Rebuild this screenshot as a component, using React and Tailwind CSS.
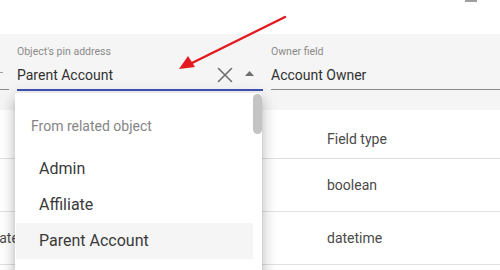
import { X } from 'lucide-react';

const rows = [
  { name: '', type: 'boolean' },
  { name: 'Date', type: 'datetime' },
];

const menuItems = ['Admin', 'Affiliate', 'Parent Account', 'Partner'];

const App = () => {
  return (
    <div
      className="relative w-[500px] h-[270px] overflow-hidden bg-white text-[#212121]"
      style={{ fontFamily: 'Roboto, "Liberation Sans", sans-serif' }}
    >
      {/* top strip */}
      <div className="h-[34px] flex justify-end">
        <div className="mr-[23px] w-[12px] h-[2px] bg-[#9e9e9e]" />
      </div>

      {/* filter band */}
      <div className="h-[76px] bg-[#f5f5f5] flex gap-2">
        <div className="w-[9px] flex flex-col">
          <div className="mt-[38px] w-[3px] h-[1px] bg-[#9e9e9e]" />
          <div className="mt-[16px] h-px bg-[#8a8a8a]" />
        </div>

        <div className="w-[246px] pt-3 flex flex-col">
          <div className="h-[12px] text-[10.5px] leading-[12px] text-[#8a8a8a]">Object's pin address</div>
          <div className="mt-2 h-[18px] flex items-center">
            <span className="flex-1 text-[14px] leading-[18px] text-[#303030]">Parent Account</span>
            <X className="w-[26px] h-[26px] text-[#6e6e6e] shrink-0" strokeWidth={1.5} />
            <svg width="9" height="5" viewBox="0 0 9 5" className="ml-[7px] mr-[9px] -mt-[3px] shrink-0">
              <path d="M0 5 L4.5 0 L9 5 Z" fill="#6e6e6e" />
            </svg>
          </div>
          <div className="mt-[5px] h-[2px] bg-[#3f51b5]" />
        </div>

        <div className="flex-1 pt-3 flex flex-col">
          <div className="h-[12px] text-[10.5px] leading-[12px] text-[#8a8a8a]">Owner field</div>
          <div className="mt-2 h-[18px] text-[14px] leading-[18px] text-[#303030]">Account Owner</div>
          <div className="mt-[5px] h-px bg-[#8a8a8a]" />
        </div>
      </div>

      {/* table behind */}
      <div className="text-[14px] text-[#4a4a4a]">
        <div className="h-[49px] pt-[19px] grid grid-cols-[327px_1fr] border-b border-[#e0e0e0]">
          <span />
          <span className="leading-5">Field type</span>
        </div>
        {rows.map((r) => (
          <div key={r.type} className="h-[53px] pt-[16px] grid grid-cols-[327px_1fr] border-b border-[#e0e0e0]">
            <span className="leading-5 -ml-[10px]">{r.name}</span>
            <span className="leading-5">{r.type}</span>
          </div>
        ))}
      </div>

      {/* arrow annotation */}
      <svg className="absolute left-0 top-0 pointer-events-none" width="500" height="270">
        <line x1="285" y1="17" x2="192" y2="63" stroke="#e3191f" strokeWidth="2.5" strokeLinecap="round" />
        <path d="M179 69 L188 56 L195 67 Z" fill="#e3191f" />
      </svg>

      {/* dropdown menu */}
      <div className="absolute left-[15px] top-[93px] w-[247px] h-[190px] bg-white flex shadow-[0_5px_6px_-3px_rgba(0,0,0,0.2),0_9px_12px_1px_rgba(0,0,0,0.14),0_3px_16px_2px_rgba(0,0,0,0.12)] rounded-[3px]">
        <div className="flex-1 pl-px">
          <div className="h-[58px] pt-[23px] pl-[15px] text-[14px] leading-5 text-[#858585]">From related object</div>
          {menuItems.map((m) => (
            <div
              key={m}
              className={`h-[36px] pl-[23px] flex items-center text-[16px] text-[#3a3a3a] ${m === 'Parent Account' ? 'bg-[#f5f5f5]' : ''}`}
            >
              {m === 'Partner' ? '' : m}
            </div>
          ))}
        </div>
        <div className="w-[9px]">
          <div className="mt-[1px] h-[40px] rounded-full bg-[#c4c4c4]" />
        </div>
      </div>
    </div>
  );
};

export default App;
